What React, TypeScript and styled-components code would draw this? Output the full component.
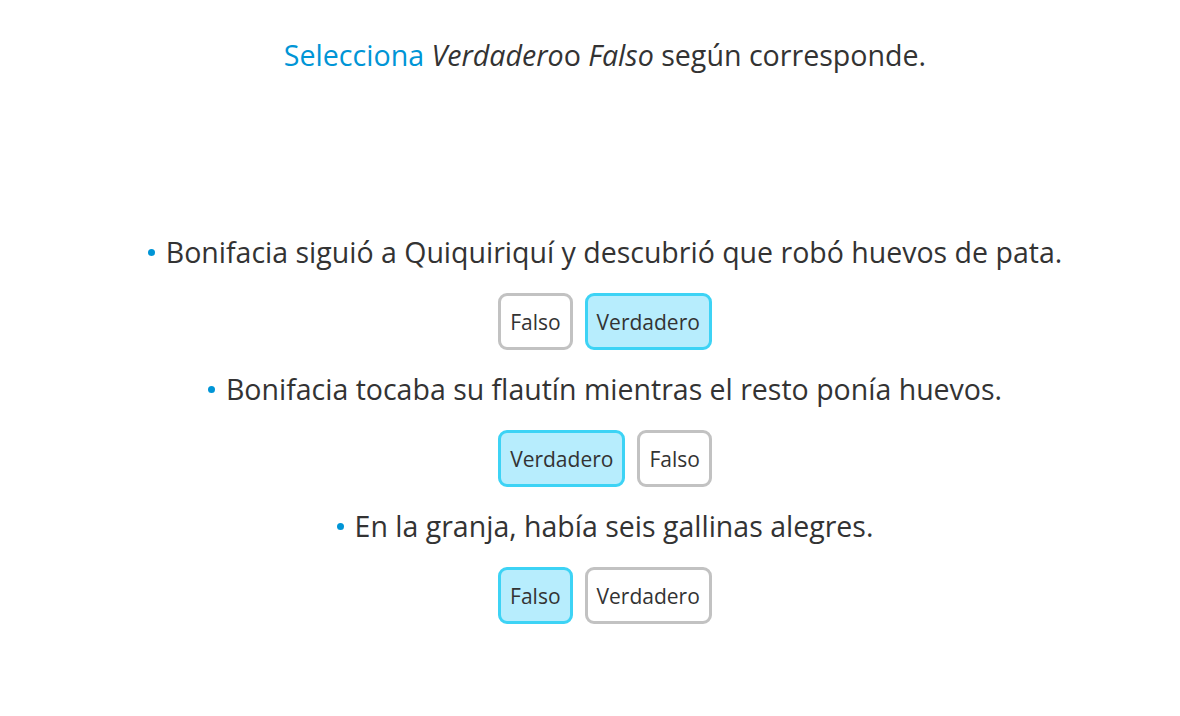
import React from "react";
import styled, { createGlobalStyle } from "styled-components";

const Global = createGlobalStyle`
  html, body { margin: 0; padding: 0; background: #fff; }
  body { font-family: "Open Sans", "Noto Sans", sans-serif; color: #333; }
`;

const Page = styled.div`
  box-sizing: border-box;
  width: 1180px;
  height: 716px;
  padding-left: 30px;
  display: flex;
  flex-direction: column;
  align-items: center;
`;

const Title = styled.h1`
  margin: 36px 0 0;
  font-size: 28.6px;
  font-weight: 400;
  line-height: 38px;
  color: #333;
  text-align: center;
`;

const Accent = styled.span`
  color: #0095d6;
`;

const List = styled.ul`
  list-style: none;
  margin: 158px 0 0;
  padding: 0;
  display: flex;
  flex-direction: column;
  align-items: center;
  gap: 19px;
`;

const Item = styled.li`
  display: flex;
  flex-direction: column;
  align-items: center;
  gap: 21px;
`;

const Statement = styled.p`
  margin: 0;
  font-size: 28.5px;
  line-height: 40px;
  display: flex;
  align-items: center;
  gap: 11px;
`;

const Bullet = styled.span`
  width: 7px;
  height: 7px;
  border-radius: 50%;
  background: #0095d6;
  flex: none;
`;

const Buttons = styled.div`
  display: flex;
  gap: 12px;
`;

const Choice = styled.button<{ $selected?: boolean }>`
  font-family: inherit;
  font-size: 21px;
  color: #333;
  height: 57px;
  padding: 0 9px;
  border: 3px solid ${(p) => (p.$selected ? "#3dd3f5" : "#c2c2c2")};
  background: ${(p) => (p.$selected ? "#b7edfd" : "#fff")};
  border-radius: 9px;
  cursor: pointer;
`;

const items: { text: string; options: string[]; selected: string }[] = [
  {
    text: "Bonifacia siguió a Quiquiriquí y descubrió que robó huevos de pata.",
    options: ["Falso", "Verdadero"],
    selected: "Verdadero",
  },
  {
    text: "Bonifacia tocaba su flautín mientras el resto ponía huevos.",
    options: ["Verdadero", "Falso"],
    selected: "Verdadero",
  },
  {
    text: "En la granja, había seis gallinas alegres.",
    options: ["Falso", "Verdadero"],
    selected: "Falso",
  },
];

export default function App() {
  return (
    <>
      <Global />
      <Page>
        <Title>
          <Accent>Selecciona</Accent> <em>Verdadero</em>o <em>Falso</em> según corresponde.
        </Title>
        <List>
          {items.map((it) => (
            <Item key={it.text}>
              <Statement>
                <Bullet />
                {it.text}
              </Statement>
              <Buttons>
                {it.options.map((o) => (
                  <Choice key={o} $selected={o === it.selected}>
                    {o}
                  </Choice>
                ))}
              </Buttons>
            </Item>
          ))}
        </List>
      </Page>
    </>
  );
}
